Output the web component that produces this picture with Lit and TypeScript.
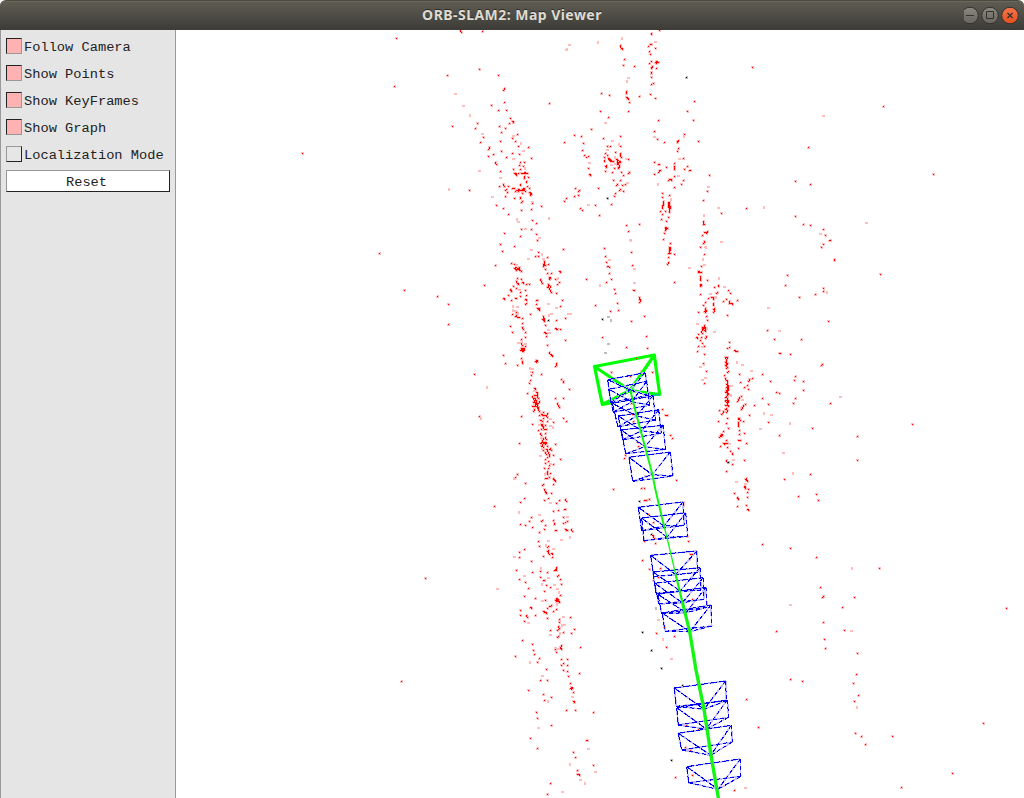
import { LitElement, html, svg, css } from "lit";
import { customElement, property } from "lit/decorators.js";

/** A patch of the point cloud. Coordinates are in thirds of a pixel from the origin. */
interface Patch {
  x: number;
  y: number;
  solid: string;
  faint?: string;
  dark?: string;
  haze?: string;
}

const PATCHES: Patch[] = [
  {
    x: 430, y: 30,
    solid: `91 2 94 7 157 5 148 118 53 136 205 136 223 175 220 180 223 217 184 227 205 241 229 241 358 220
      241 265 238 280 248 275 251 277 142 280 136 295 67 289 208 289 226 295 214 307 160 322 151 337 211 334
      263 313 247 325 256 334 265 349 296 352 178 352 175 358 214 364 190 373 175 379 247 370 268 373 229 382
      304 385 196 397 199 403 271 397 283 397 268 406 280 409 271 418 250 418 211 424 253 429 256 430 256 433
      259 433 258 436 265 430 274 430 277 430 280 430 283 427 286 430 289 430 292 430 283 439 283 442 283 445
      296 442 289 455 288 458 208 469 220 463 223 469 235 469 270 464 271 467 292 469 298 475 229 478 226 481
      232 487 118 481 247 475 250 475 253 475 259 481 256 484 265 478 268 480 271 481 274 481 277 478 280 475
      283 475 280 480 286 484 265 484 277 490 298 487 301 490 304 493 302 496 226 499 271 502 271 505 253 505
      274 517 277 514 307 520 199 526 220 535 334 529 304 538 274 541 235 553 307 571 319 580 274 598 304 598
      223 610 271 619 319 613 322 631 211 643 253 649`,
    faint: `418 44 410 58 76 189 100 226 118 255 157 310 148 420 55 477 188 499 249 315 270 339 280 361 249 385
      283 415 210 442 307 514 258 567 265 573 286 594 354 564 328 621 304 659`,
  },
  {
    x: 560, y: 30,
    solid: `298 2 274 11 274 14 181 46 182 50 184 55 187 59 265 49 271 44 274 43 286 55 268 64 271 73 194 88
      190 106 223 109 274 94 268 100 289 94 286 97 289 97 292 97 296 97 289 100 277 109 274 112 274 115 289 115
      274 127 274 130 274 142 274 163 280 160 199 184 199 187 199 190 271 193 125 190 148 196 238 199 199 202
      202 205 204 208 208 217 286 205 404 214 121 244 206 244 382 244 145 262 94 298 295 271 401 271 283 304
      43 316 64 319 181 319 130 325 70 340 13 337 292 328 313 337 373 313 355 331 352 334 352 337 415 334
      67 361 142 349 151 349 181 349 355 355 352 364 136 370 166 367 181 370 181 373 181 376 142 376 73 376
      79 382 85 379 133 382 184 382 145 385 148 388 148 391 151 391 151 394 154 394 169 388 172 391 160 394
      133 391 133 394 178 394 172 397 175 400 181 397 172 403 178 406 178 409 175 412 175 415 163 415 139 406
      136 409 139 412 136 424 157 427 184 427 190 436 208 427 205 430 205 388 370 385 85 415 88 433 90 435
      91 436 283 397 295 403 298 403 343 400 343 409 343 412 343 415 343 418 319 412 382 409 373 418 388 421
      391 422 298 421 301 421 295 427 283 433 343 439 448 436 334 448 328 448 325 451 334 451 370 451 364 463
      343 472 160 451 181 451 172 463 169 466 187 466 196 463 181 478 178 481 190 484 46 475 58 481 55 484
      55 496 43 499 116 475 166 490 163 499 19 505 13 514 154 523 106 526 61 535 67 541 118 556 442 484 430 511
      307 490 328 496 307 502 310 514 310 517 310 520 310 523 307 526 307 529 307 532 307 535 325 516 328 516
      325 520 328 520 325 524 328 524 325 528 328 528 331 530 328 534 331 534 328 538 328 543 328 547
      301 544 316 544 307 553 325 562 304 568 319 574 316 591 316 594 319 595 322 595 316 601 313 610 310 628
      484 550 430 574 430 578 430 582 433 583 442 604 433 607 439 607 439 610 427 616 433 634 430 640
      331 640 328 652 331 655 331 658 421 652 199 586 238 583 205 604 10 658 134 655`,
    faint: `113 36 28 44 19 58 185 24 286 33 206 142 198 153 137 277 158 331 176 343 142 358 283 320 370 319
      358 385 87 396 163 382 154 403 166 401 172 409 199 386 356 435 293 464 202 457 85 523 331 507 445 468
      474 532 430 556 210 628 485 633 436 651`,
    dark: `379 142 142 505`,
  },
  {
    x: 480, y: 240,
    solid: `172 2 61 13 67 34 250 28 175 37 166 49 175 49 202 52 193 64 205 73 190 73 193 76 196 76 190 79 193 70
      94 70 103 73 46 76 118 82 106 82 103 85 112 86 118 88 115 88 118 91 124 94 106 88 109 91 196 88 202 100
      238 94 240 97 208 112 211 115 208 118 214 100 226 118 181 118 184 124 187 130 238 127 232 133 205 133
      205 136 211 139 112 115 109 124 112 130 124 118 127 127 130 130 115 133 100 139 109 145 13 136 139 133
      148 133 91 148 91 151 94 154 202 142 208 145 211 151 214 157 229 160 121 157 136 151 139 166 85 166
      70 175 73 179 94 181 106 175 109 176 121 169 136 178 139 181 139 190 136 193 169 181 172 181 169 193 248 181
      241 199 172 205 175 205 178 205 175 208 178 211 97 223 151 223 109 217 109 226 106 229 112 231 115 231
      118 232 127 235 190 229 190 235 187 238 193 238 190 241 193 244 256 235 229 241 91 259 127 250 127 262
      130 268 196 256 226 265 229 268 232 268 241 268 193 277 196 280 199 280 97 277 136 277 136 292 199 289
      256 301 124 298 124 310 127 316 202 316 136 319 124 325 127 325 130 325 124 328 127 328 130 328 127 331 130 331
      127 334 130 334 121 331 133 328 70 346 208 337 211 343 214 346 217 349 124 355 127 364 127 367 127 370 76 370
      112 376 166 364 169 361 172 364 169 367 229 370 229 376 226 379 157 397 184 403 154 406 151 421 148 430
      244 418 250 424 250 427 163 445 166 448 268 448 142 460 169 457 172 460 163 466 169 466 172 469 157 469
      160 475 166 475 175 475 163 481 169 481 178 484 160 487 166 487 169 490 166 493 172 493 175 490 157 499
      163 499 169 499 175 502 163 508 175 508 160 514 178 514 172 502 226 475 250 475 232 490 235 496 238 502
      190 517 202 520 184 523 178 526 187 526 193 526 199 526 190 535 202 532 124 529 250 535 187 544 181 541
      202 544 220 547 259 544 184 553 187 553 187 559 190 562 196 556 193 568 184 568 175 571 157 553 181 580
      184 586 196 580 199 568 196 592 190 595 199 598 187 601 184 607 190 607 193 607 196 607 199 610 193 610
      196 613 181 610 187 613 184 619 190 622 202 619 118 610 226 613 211 625 199 628 190 631 202 631 196 637
      205 637 208 628 214 631 199 643 208 643 202 652 208 649 196 658 220 646 205 664 241 658 220 673 196 670
      208 676 193 685 205 685 112 703 106 712 202 700 208 712 202 715 220 715
      373 25 376 49 379 67 382 79 388 82 388 100 394 118 379 127 403 148 406 160 319 118 346 196 412 190 415 211
      391 214 367 292 454 37 457 76 460 151 463 151 478 172 478 178 481 181 478 187 454 244 439 322 493 229 500 289
      502 325 469 355 394 397 451 409 517 397 454 490 457 523 460 544 472 607 475 619 436 646 433 655 496 708`,
    faint: `155 29 145 56 184 43 190 55 109 74 232 115 118 148 112 198 97 198 205 190 229 202 97 210 106 210 271 219
      205 226 265 220 214 220 112 220 205 268 208 278 124 300 115 307 136 310 148 386 157 386 154 394 18 443
      163 451 163 491 184 520 211 535 211 556 217 562 184 592 178 553 184 625 181 645 211 670 2 534 104 714
      388 58 358 135 463 86 463 128 451 2 484 390 478 619 196 700`,
    dark: `205 241 367 238`,
    haze: `384 228 392 242 384 310 376 338`,
  },
  {
    x: 640, y: 240,
    solid: `91 10 88 22 88 28 88 34 85 40 91 40 85 52 103 43 85 67 82 73 103 127 190 10 193 7 181 22 193 43 184 79
      175 97 178 97 181 97 175 94 184 97 181 109 181 115 181 121 181 133 181 139 184 136 202 121 181 163 223 142
      235 136 235 139 232 157 229 160 265 151 271 160 250 184 259 178 268 184 274 190 268 190 277 193 292 181
      262 226 205 175 214 172 220 172 220 178 196 187 190 196 220 190 220 196 223 205 220 208 223 211 220 217
      196 205 196 211 193 214 199 211 196 217 175 217 199 229 202 241 193 256 187 262 193 262 190 265 196 265
      187 268 193 271 175 283 169 292 172 295 184 274 196 274 187 280 199 289 184 292 196 295 181 301 187 310
      175 319 193 319 172 334 193 343 190 370 199 394 193 430 268 307 268 322 262 325 283 331 286 334 292 334
      256 352 262 352 259 358 259 361 256 367 259 370 262 370 259 376 256 376 262 382 259 385 265 394 262 397
      253 406 256 415 259 421 262 424 262 430 259 433 262 436 265 439 259 442 262 445 265 448 259 451 262 454
      256 457 262 460 265 463 262 466 259 469 256 472 262 475 256 481 262 481 265 484 259 487 262 490 256 496
      262 496 265 499 259 505 256 508 262 511 259 517 238 511 250 514 247 520 244 523 235 544 262 535 259 550
      265 565 250 574 244 583 241 586 247 586 244 589 238 592 259 601 250 610 256 610 253 613 241 619 262 610 262 622
      271 634 277 640 277 643 277 673 313 661 259 661 262 667 259 694 298 403 301 427 328 418 337 415 325 424
      322 436 325 448 313 442 304 469 298 472 295 478 292 484 316 493 310 496 307 502 304 508 328 526 343 496
      295 535 298 535 295 538 301 541 295 547 295 550 295 553 310 544 295 559 298 571 313 580 298 583 295 601
      298 601 301 601 319 610 295 625 319 715 316 718 319 721 322 724 313 739 316 742 316 745 325 748 322 757
      283 760 292 772 292 775 295 778 322 772 292 799 319 796 322 808 325 811
      571 2 544 22 583 61 442 106 436 136 478 172 526 163 550 145 550 154 565 244 382 271 403 298 484 298
      418 340 421 340 451 343 544 376 548 373 367 403 391 424 466 409 463 421 490 424 490 451 409 457 418 460
      466 475 460 490 367 475 385 493 571 490 385 547 418 586 517 565 652 589 652 661 511 703 433 718 475 769
      529 763 535 781 37 397 67 508 76 526 82 526 91 586 97 595 109 721 5 745 13 745 16 781 28 778 16 708
      130 787 130 796 25 823`,
    faint: `244 4 196 20 188 58 147 83 193 73 235 114 254 139 211 160 226 172 172 250 222 274 199 265 187 319
      182 379 190 373 187 419 196 412 289 366 306 372 334 390 271 466 274 436 307 478 370 519 394 524 362 566
      448 549 386 203 419 271 559 157 600 469 431 637 458 700 280 657 290 724 301 505 268 610 316 730`,
    dark: `265 667`,
  },
  {
    x: 480, y: 470,
    solid: `202 3 202 13 211 10 208 22 196 25 220 28 223 31 226 34 112 13 136 40 190 43 187 46 220 43 193 58
      196 64 196 67 199 70 214 70 133 85 121 97 205 85 193 91 238 91 229 100 256 88 259 94 235 121 220 124
      253 118 256 118 154 142 148 154 187 151 184 154 220 151 250 142 121 163 136 166 196 166 223 160 223 163
      250 160 256 157 262 154 157 172 193 178 178 187 229 181 226 181 256 178 259 181 262 181 274 178 277 184
      43 109 400 58 175 214 178 229 133 238 118 247 118 262 190 259 205 229 202 232 205 241 202 244 205 247
      208 253 214 250 217 253 217 262 154 274 229 292 229 295 226 298 229 301 223 301 109 301 157 307 181 304
      202 307 181 322 235 316 232 319 190 331 193 331 118 328 136 337 241 328 199 346 211 352 244 343 145 355
      193 364 241 376 133 379 166 385 196 391 229 385 232 388 235 391 226 391 229 394 232 391 238 397 235 394
      214 406 211 409 208 409 202 415 151 412 154 415 229 418 121 421 220 424 190 424 193 427 196 427 199 430
      121 436 139 436 142 442 166 436 202 445 238 448 238 457 271 442 133 454 235 469 238 475 235 478 232 481
      211 481 283 478 250 487 274 490 235 499 232 502 127 511 157 523 244 526 241 532 241 535 244 538 226 538
      229 547 301 532 160 541 163 553 106 559 178 565 172 577 244 568 262 568 250 580 244 586 262 586 250 601
      262 604 199 598 298 610 265 619 181 631 202 631 271 640 274 652 271 655 274 655 277 655 274 658 280 667
      145 661 190 673 214 682 193 691 280 694 283 697 169 727 259 721 286 721 340 727 172 745 214 766 151 805
      319 811 322 811 172 835 280 847 286 862 340 886 292 901 292 913 295 913 298 916 211 940 202 973`,
    faint: `192 12 104 22 211 98 115 126 178 133 262 139 269 203 243 208 205 211 197 226 104 259 220 234 181 294
      132 316 205 322 183 343 223 342 232 354 235 366 53 354 187 391 229 403 145 457 249 438 244 467 252 462
      211 492 238 490 226 532 232 535 148 576 186 615 277 678 201 694 174 772 324 835 268 883 345 903 301 927
      313 939 247 965`,
  },
  {
    x: 625, y: 490,
    solid: `58 31 64 30 73 28 70 73 85 97 82 136 85 139 88 145 91 160 57 155 174 38 176 46 187 139 190 154 52 211
      73 238 106 235 85 272 101 262 197 193 203 193 194 208 203 329 94 430 148 439 328 10`,
    faint: `101 387 112 449 101 284`,
    dark: `43 34 79 134 52 427`,
    haze: `92 355`,
  },
  {
    x: 660, y: 670,
    solid: `260 88 295 172 79 165 116 177 76 232 91 240 46 322 97 316 223 361`,
    faint: `257 352`,
    dark: `67 46 34 271`,
  },
  {
    x: 730, y: 500,
    solid: `265 2 97 133 181 145 259 172 448 205 271 262 280 289 277 292 373 292 337 322 829 325 280 367 343 391
      139 394 283 418 286 445 382 460 379 523 370 550 181 538 217 544 385 586 373 604 49 598 760 670 85 682
      376 700 394 709 487 709 406 733 667 820 514 862`,
    faint: `363 205 181 312 364 390 378 622`,
  },
  {
    x: 0, y: 0,
    solid: `1189 115 1183 259 907 460 1138 760 1213 871 1312 888 1345 912 1345 974 1424 1123 1438 1250 1276 1735
      1204 2044 2258 202 2650 319 2801 523 2425 441 2386 544 2431 554 2386 648 2410 672 2431 676 2470 688
      2476 706 2488 720 2470 732 2503 777 2641 823 2239 625 2737 1273 1992 1881 1999 1941`,
    faint: `2471 347 2598 666 2290 622 2460 700 2015 1974`,
    dark: `1954 1951 1983 2004`,
  },
];

type Point = [number, number];

/** Corners clockwise from the top left, then the optical centre, in thirds of a pixel. */
const KEYFRAMES: { x: number; y: number; quads: number[][] }[] = [
  {
    x: 580, y: 340,
    quads: [
      [83, 119, 196, 98, 205, 166, 92, 188, 150, 150],
      [86, 148, 200, 124, 209, 195, 100, 217, 155, 185],
      [97, 190, 219, 167, 227, 240, 114, 260, 170, 228],
      [115, 228, 236, 209, 244, 280, 128, 299, 185, 272],
      [124, 270, 249, 256, 257, 328, 137, 341, 195, 320],
      [147, 352, 271, 336, 279, 408, 158, 424, 217, 404],
    ],
  },
  {
    x: 625, y: 490,
    quads: [
      [40, 52, 174, 36, 178, 106, 50, 122, 117, 108],
      [50, 84, 182, 68, 188, 139, 57, 152, 126, 142],
      [77, 196, 215, 183, 218, 247, 86, 260, 152, 254],
      [84, 246, 225, 233, 228, 300, 93, 310, 165, 303],
      [89, 280, 235, 263, 237, 328, 101, 342, 172, 338],
      [99, 313, 243, 292, 246, 352, 110, 371, 183, 368],
      [112, 369, 258, 345, 260, 408, 120, 424, 194, 425],
    ],
  },
  {
    x: 660, y: 670,
    quads: [
      [43, 54, 197, 33, 199, 92, 49, 109, 132, 118],
      [50, 113, 202, 90, 206, 142, 55, 165, 139, 177],
      [55, 190, 214, 166, 217, 216, 65, 240, 152, 256],
      [80, 290, 241, 267, 242, 319, 86, 338, 174, 358],
    ],
  },
];

function read(patch: Patch, list = ""): Point[] {
  const n = list.trim().split(/\s+/).filter(Boolean).map(Number);
  const out: Point[] = [];
  for (let i = 0; i + 1 < n.length; i += 2) {
    out.push([patch.x + Math.floor(n[i] / 3), patch.y + Math.floor(n[i + 1] / 3)]);
  }
  return out;
}

const collect = (key: "solid" | "faint" | "dark" | "haze") =>
  PATCHES.flatMap((p) => read(p, p[key]));

const cell = (x: number, y: number, w: number, h: number) => `M${x} ${y}h${w}v${h}h${-w}z`;

/** A three pixel dot with one corner missing. */
const halo = (pts: Point[]) =>
  pts
    .map(([x, y], i) =>
      i % 2
        ? cell(x - 1, y - 1, 3, 2) + cell(x, y + 1, 2, 1)
        : cell(x, y - 1, 2, 1) + cell(x - 1, y, 3, 2))
    .join("");

/** Points that nearly touch run together into one blot. */
function core(pts: Point[]): string {
  const taken = new Set(pts.map(([x, y]) => `${x},${y}`));
  const has = (x: number, y: number) => taken.has(`${x},${y}`);
  return pts
    .map(([x, y]) => {
      const wide = has(x + 2, y) || has(x + 2, y + 1) || has(x + 1, y + 1) ? 2 : 1;
      const tall = has(x, y + 2) || has(x + 1, y + 2) || has(x - 1, y + 2) ? 2 : 1;
      return cell(x, y, wide, 1) + (tall === 2 ? cell(x, y + 1, 1, 1) : "");
    })
    .join("");
}

const smear = (pts: Point[]) =>
  pts.map(([x, y], i) => (i % 3 === 1 ? cell(x, y - 1, 2, 3) : cell(x - 1, y, 3, 2))).join("");

/** Outline of the solid strokes and of the broken strokes of every keyframe. */
function frustums(): { firm: string; broken: string } {
  let firm = "";
  let broken = "";
  for (const g of KEYFRAMES) {
    for (const q of g.quads) {
      const p: string[] = [];
      for (let i = 0; i < 10; i += 2) {
        p.push(`${(g.x + q[i] / 3).toFixed(1)} ${(g.y + q[i + 1] / 3).toFixed(1)}`);
      }
      const [a, b, c, d, o] = p;
      firm += `M${a}L${o}M${a}L${d}M${a}L${b}`;
      broken += `M${b}L${c}M${d}L${c}M${b}L${o}M${c}L${o}M${d}L${o}`;
    }
  }
  return { firm, broken };
}

@customElement("map-view")
export class MapView extends LitElement {
  static styles = css`
    :host { display: block; background: #fff; overflow: hidden; }
    svg { display: block; width: 848px; height: 768px; }
    .crisp { shape-rendering: crispEdges; }
    .halo { fill: #ffbdbd; }
    .core { fill: #f00; }
    .grey { fill: #bdbdbd; }
    .black { fill: #000; }
    .line { fill: none; stroke-linejoin: round; stroke-linecap: round; }
    .camera { stroke: #0f0; stroke-width: 3.2; }
    .teal { stroke: #10b8b0; stroke-width: 1.6; }
    .glow { fill: none; stroke: #bdbdff; stroke-width: 1.7; }
    .edge { fill: none; stroke: #0000f0; stroke-width: 1; }
    .firm { stroke-dasharray: 7 2; }
    .broken { stroke-dasharray: 4 3; }
    .graph { stroke: #14f514; }
  `;

  render() {
    const solid = collect("solid");
    const dark = collect("dark");
    const { firm, broken } = frustums();
    return html`<svg viewBox="176 30 848 768" aria-label="Map">
      ${svg`
        <g class="crisp">
          <path class="halo" d=${halo(solid) + smear(collect("faint"))}></path>
          <path class="grey" d=${halo(dark) + smear(collect("haze"))}></path>
        </g>
        <path class="line camera" d="M594.5 366.5L654.3 355L659.7 394.5L630 390.5L602.3 404.5Z M594.5 366.5L630 390.5L654.3 355 M602.3 404.5L613 402.5"></path>
        <path class="line teal" d="M613 402.5L659 394.5"></path>
        <path class="glow crisp" d=${firm + broken}></path>
        <path class="edge firm crisp" d=${firm}></path>
        <path class="edge broken crisp" d=${broken}></path>
        <g class="line graph">
          <path stroke-width="2" d="M630.5 391L636.7 416L645 446.7L652.5 474.7L655.5 490L664 526"></path>
          <path stroke-width="1.3" d="M664 526L667 537.5L675.7 574.7"></path>
          <path stroke-width="2.2" d="M675.7 574.7L682.5 602.7"></path>
          <path stroke-width="3.2" d="M682.5 602.7L689.7 631.7"></path>
          <path stroke-width="3.4" d="M689.7 631.7L696 670L704 709.3L711 755.3L718.7 800"></path>
        </g>
        <g class="crisp">
          <path class="core" d=${core(solid)}></path>
          <path class="black" d=${core(dark)}></path>
        </g>`}
    </svg>`;
  }
}

@customElement("panel-toggle")
export class PanelToggle extends LitElement {
  @property() label = "";
  @property({ type: Boolean }) checked = false;

  static styles = css`
    :host { display: flex; align-items: flex-start; height: 27px; }
    .box {
      box-sizing: border-box; width: 16px; height: 16px; margin: 5px 2px 0 0; flex: none;
      border: 1px solid; border-color: #999 #222 #222 #999; background: #e6e6e6;
    }
    .on { background: #ffb2b2; border-color: #222 #999 #999 #222; }
    .text { white-space: pre; padding-top: 7px; }
  `;

  render() {
    return html`<span class="box ${this.checked ? "on" : ""}"></span><span class="text">${this.label}</span>`;
  }
}

@customElement("app-root")
export class AppRoot extends LitElement {
  static styles = css`
    :host { display: flex; flex-direction: column; width: 1024px; height: 798px; overflow: hidden; background: #fff; }
    .bar {
      box-sizing: border-box; height: 30px; flex: none; display: grid; grid-template-columns: 60px 1fr 60px;
      align-items: center; border-radius: 6px 6px 0 0; border-top: 1px solid #4b4a42;
      background: linear-gradient(#5f5d53, #3c3b37);
      box-shadow: inset 0 1px #6b6959;
    }
    .title {
      grid-column: 2; text-align: center; color: #dfdbd2; font: bold 14px/20px "Noto Sans", "Open Sans", sans-serif;
      letter-spacing: 0.46px; text-shadow: 0 -1px #2b2a27; padding-bottom: 2px;
    }
    .buttons { display: block; width: 60px; height: 20px; }
    .body { flex: 1; display: flex; min-height: 0; }
    .panel {
      box-sizing: border-box; width: 176px; flex: none; background: #e5e5e5;
      border: solid #999; border-width: 0 1px; padding: 3px 5px 0;
      font: 13.7px/16px "Liberation Mono", monospace; color: #222;
    }
    .reset {
      box-sizing: border-box; width: 164px; height: 22px; margin-top: 2px; padding: 3px 3px 0 0; display: block;
      border: 1px solid; border-color: #999 #222 #222 #999; background: #fff;
      font: inherit; color: inherit; text-align: center; border-radius: 0;
    }
  `;

  render() {
    return html`
      <header class="bar">
        <div class="title">ORB-SLAM2: Map Viewer</div>
        <svg class="buttons" viewBox="964 5 60 20">
          <defs>
            <linearGradient id="g" x2="0" y2="1"><stop stop-color="#8a887f"></stop><stop offset="1" stop-color="#66645d"></stop></linearGradient>
            <linearGradient id="r" x2="0" y2="1"><stop stop-color="#f4764c"></stop><stop offset="1" stop-color="#e64e1d"></stop></linearGradient>
          </defs>
          <g stroke="#33322d">
            <circle cx="970" cy="14.5" r="8.3" fill="url(#g)"></circle>
            <circle cx="990" cy="14.5" r="8.3" fill="url(#g)"></circle>
            <circle cx="1010" cy="14.5" r="8.3" fill="url(#r)"></circle>
            <path d="M966 14.5h8M986.5 10.5h7v7h-7z" fill="none"></path>
            <path d="M1007.5 12l5 5m0-5l-5 5" stroke-width="1.4"></path>
          </g>
        </svg>
      </header>
      <main class="body">
        <aside class="panel">
          <panel-toggle label="Follow Camera" checked></panel-toggle>
          <panel-toggle label="Show Points" checked></panel-toggle>
          <panel-toggle label="Show KeyFrames" checked></panel-toggle>
          <panel-toggle label="Show Graph" checked></panel-toggle>
          <panel-toggle label="Localization Mode"></panel-toggle>
          <button class="reset">Reset</button>
        </aside>
        <map-view></map-view>
      </main>
    `;
  }
}
